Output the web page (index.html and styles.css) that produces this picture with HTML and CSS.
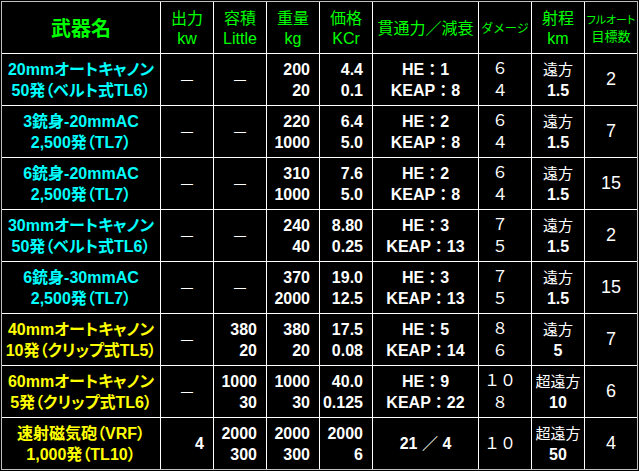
FILE: index.html
```html
<!DOCTYPE html>
<html lang="ja">
<head>
<meta charset="utf-8">
<title>武器一覧</title>
<link rel="stylesheet" href="styles.css">
</head>
<body>
<div class="sheet">
  <div class="cell hd hd-name">武器名</div>
  <div class="cell hd"><span>出力</span><span class="unit">kw</span></div>
  <div class="cell hd"><span>容積</span><span class="unit">Little</span></div>
  <div class="cell hd"><span>重量</span><span class="unit">kg</span></div>
  <div class="cell hd"><span>価格</span><span class="unit">KCr</span></div>
  <div class="cell hd hd-one">貫通力／減衰</div>
  <div class="cell hd hd-dmg">ダメージ</div>
  <div class="cell hd"><span>射程</span><span class="unit">km</span></div>
  <div class="cell hd hd-auto"><span class="small">フルオート</span><span class="mid">目標数</span></div>

  <div class="cell name"><span>20mmオートキャノン</span><span>50発（ベルト式TL6）</span></div>
  <div class="cell dash">—</div>
  <div class="cell dash">—</div>
  <div class="cell num"><span>200</span><span>20</span></div>
  <div class="cell num"><span>4.4</span><span>0.1</span></div>
  <div class="cell pen"><span>HE：1</span><span>KEAP：8</span></div>
  <div class="cell dmg"><span>６</span><span>４</span></div>
  <div class="cell rng"><span class="far">遠方</span><span>1.5</span></div>
  <div class="cell auto">2</div>

  <div class="cell name"><span>3銃身-20mmAC</span><span>2,500発（TL7）</span></div>
  <div class="cell dash">—</div>
  <div class="cell dash">—</div>
  <div class="cell num"><span>220</span><span>1000</span></div>
  <div class="cell num"><span>6.4</span><span>5.0</span></div>
  <div class="cell pen"><span>HE：2</span><span>KEAP：8</span></div>
  <div class="cell dmg"><span>６</span><span>４</span></div>
  <div class="cell rng"><span class="far">遠方</span><span>1.5</span></div>
  <div class="cell auto">7</div>

  <div class="cell name"><span>6銃身-20mmAC</span><span>2,500発（TL7）</span></div>
  <div class="cell dash">—</div>
  <div class="cell dash">—</div>
  <div class="cell num"><span>310</span><span>1000</span></div>
  <div class="cell num"><span>7.6</span><span>5.0</span></div>
  <div class="cell pen"><span>HE：2</span><span>KEAP：8</span></div>
  <div class="cell dmg"><span>６</span><span>４</span></div>
  <div class="cell rng"><span class="far">遠方</span><span>1.5</span></div>
  <div class="cell auto">15</div>

  <div class="cell name"><span>30mmオートキャノン</span><span>50発（ベルト式TL6）</span></div>
  <div class="cell dash">—</div>
  <div class="cell dash">—</div>
  <div class="cell num"><span>240</span><span>40</span></div>
  <div class="cell num"><span>8.80</span><span>0.25</span></div>
  <div class="cell pen"><span>HE：3</span><span>KEAP：13</span></div>
  <div class="cell dmg"><span>７</span><span>５</span></div>
  <div class="cell rng"><span class="far">遠方</span><span>1.5</span></div>
  <div class="cell auto">2</div>

  <div class="cell name"><span>6銃身-30mmAC</span><span>2,500発（TL7）</span></div>
  <div class="cell dash">—</div>
  <div class="cell dash">—</div>
  <div class="cell num"><span>370</span><span>2000</span></div>
  <div class="cell num"><span>19.0</span><span>12.5</span></div>
  <div class="cell pen"><span>HE：3</span><span>KEAP：13</span></div>
  <div class="cell dmg"><span>７</span><span>５</span></div>
  <div class="cell rng"><span class="far">遠方</span><span>1.5</span></div>
  <div class="cell auto">15</div>

  <div class="cell name yellow"><span>40mmオートキャノン</span><span>10発（クリップ式TL5）</span></div>
  <div class="cell dash">—</div>
  <div class="cell num"><span>380</span><span>20</span></div>
  <div class="cell num"><span>380</span><span>20</span></div>
  <div class="cell num"><span>17.5</span><span>0.08</span></div>
  <div class="cell pen"><span>HE：5</span><span>KEAP：14</span></div>
  <div class="cell dmg"><span>８</span><span>６</span></div>
  <div class="cell rng"><span class="far">遠方</span><span>5</span></div>
  <div class="cell auto">7</div>

  <div class="cell name yellow"><span>60mmオートキャノン</span><span>5発（クリップ式TL6）</span></div>
  <div class="cell dash">—</div>
  <div class="cell num"><span>1000</span><span>30</span></div>
  <div class="cell num"><span>1000</span><span>30</span></div>
  <div class="cell num"><span>40.0</span><span>0.125</span></div>
  <div class="cell pen"><span>HE：9</span><span>KEAP：22</span></div>
  <div class="cell dmg"><span>１０</span><span>８</span></div>
  <div class="cell rng"><span class="far">超遠方</span><span>10</span></div>
  <div class="cell auto">6</div>

  <div class="cell name yellow"><span>速射磁気砲（VRF）</span><span>1,000発（TL10）</span></div>
  <div class="cell num"><span>4</span></div>
  <div class="cell num"><span>2000</span><span>300</span></div>
  <div class="cell num"><span>2000</span><span>300</span></div>
  <div class="cell num"><span>2000</span><span>6</span></div>
  <div class="cell pen"><span>21 ／ 4</span></div>
  <div class="cell dmg"><span>１０</span></div>
  <div class="cell rng"><span class="far">超遠方</span><span>50</span></div>
  <div class="cell auto">4</div>
</div>
</body>
</html>
```

FILE: styles.css
```css
* {
  box-sizing: border-box;
}

html,
body {
  background: #000;
}

body {
  margin: 0;
  font-family: "Liberation Sans", "Noto Sans CJK JP", sans-serif;
  color: #fff;
}

.sheet {
  display: grid;
  grid-template-columns: 158px repeat(4, 52px) 105px repeat(3, 52px);
  grid-auto-rows: 51px;
  gap: 1px;
  width: max-content;
  margin: 1px;
  background: #fff;
  border: 1px solid #c0c0c0;
}

.cell {
  display: flex;
  flex-direction: column;
  justify-content: center;
  align-items: center;
  overflow: hidden;
  white-space: nowrap;
  background: #000;
}

/* header */
.hd {
  color: #00ff00;
  font-size: 16px;
  line-height: 20px;
  padding-top: 2px;
}

.hd-name {
  font-size: 20px;
  font-weight: bold;
}

.hd-one {
  font-size: 16px;
}

.hd-dmg {
  font-size: 12px;
}

.hd-auto .small {
  font-size: 11px;
  line-height: 15px;
  font-feature-settings: "palt";
}

.hd-auto .mid {
  font-size: 13px;
  line-height: 17px;
}

/* body */
.name {
  color: #00ffff;
  font-weight: bold;
  font-size: 16px;
  line-height: 21px;
  font-feature-settings: "palt";
}

.name.yellow {
  color: #ffff00;
}

.num {
  align-items: flex-end;
  padding-right: 9px;
  font-weight: bold;
  font-size: 16px;
  line-height: 21px;
}

.dash {
  font-size: 12px;
}

.pen {
  font-weight: bold;
  font-size: 16px;
  line-height: 21px;
}

.dmg {
  padding-right: 10px;
  font-size: 16px;
  line-height: 22px;
}

.rng {
  font-weight: bold;
  font-size: 16px;
  line-height: 21px;
}

.rng .far {
  font-weight: normal;
  font-size: 15px;
}

.auto {
  font-size: 18px;
}
```
